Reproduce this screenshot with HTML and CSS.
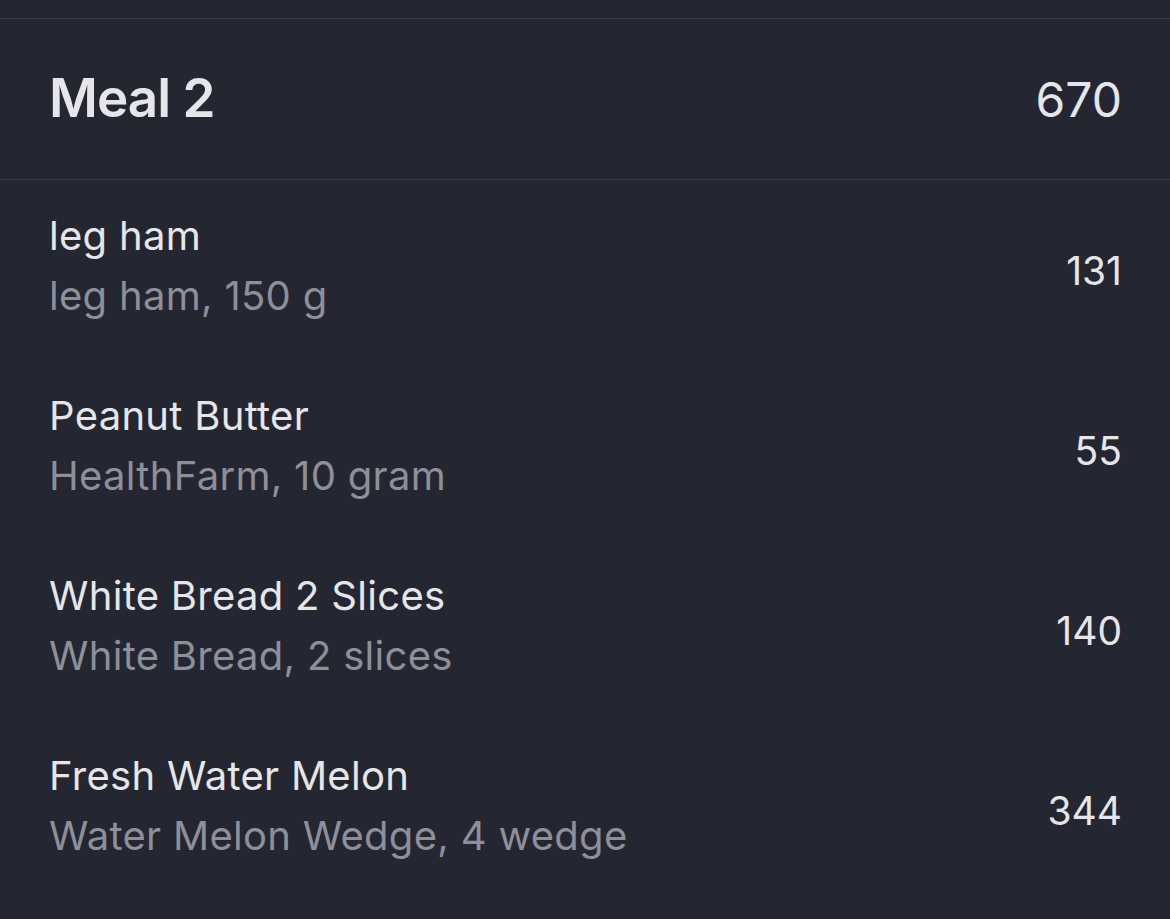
FILE: index.html
```html
<!DOCTYPE html>
<html lang="en">
<head>
    <meta charset="UTF-8">
    <meta name="viewport" content="width=device-width, initial-scale=1.0">
    <title>Meal 2</title>
    <link rel="stylesheet" href="styles.css">
</head>
<body>
    <div class="top-bar"></div>
    <section class="meal">
        <header class="meal-header">
            <h2 class="meal-title">Meal 2</h2>
            <span class="meal-total">670</span>
        </header>
        <ul class="food-list">
            <li class="food">
                <div class="food-info">
                    <span class="food-name">leg ham</span>
                    <span class="food-detail">leg ham, 150 g</span>
                </div>
                <span class="food-cal">131</span>
            </li>
            <li class="food">
                <div class="food-info">
                    <span class="food-name">Peanut Butter</span>
                    <span class="food-detail">HealthFarm, 10 gram</span>
                </div>
                <span class="food-cal">55</span>
            </li>
            <li class="food">
                <div class="food-info">
                    <span class="food-name">White Bread 2 Slices</span>
                    <span class="food-detail">White Bread, 2 slices</span>
                </div>
                <span class="food-cal">140</span>
            </li>
            <li class="food">
                <div class="food-info">
                    <span class="food-name">Fresh Water Melon</span>
                    <span class="food-detail">Water Melon Wedge, 4 wedge</span>
                </div>
                <span class="food-cal">344</span>
            </li>
        </ul>
    </section>
</body>
</html>
```

FILE: styles.css
```css
body {
    margin: 0;
    height: 100vh;
    overflow: hidden;
    background: #242631;
    color: #e6e6ea;
    font-family: Inter, "Noto Sans", sans-serif;
}
.top-bar {
    height: 18px;
    border-bottom: 1px solid #393b46;
}
.meal-header {
    display: flex;
    justify-content: space-between;
    align-items: baseline;
    padding: 46px 48px 48px 49px;
    border-bottom: 1px solid #393b46;
}
.meal-title {
    margin: 0;
    font-size: 53px;
    font-weight: 600;
    letter-spacing: -1px;
    line-height: 66px;
}
.meal-total {
    font-size: 48px;
    font-weight: 400;
}
.food-list {
    list-style: none;
    margin: 0;
    padding: 0;
}
.food {
    display: flex;
    justify-content: space-between;
    align-items: center;
    padding: 26px 48px 34px 49px;
}
.food-info {
    display: flex;
    flex-direction: column;
}
.food-name,
.food-detail {
    font-size: 40px;
    letter-spacing: 0.3px;
    line-height: 60px;
}
.food-detail {
    color: #8d8f99;
}
.food-cal {
    font-size: 39px;
    margin-top: 8px;
}
```
